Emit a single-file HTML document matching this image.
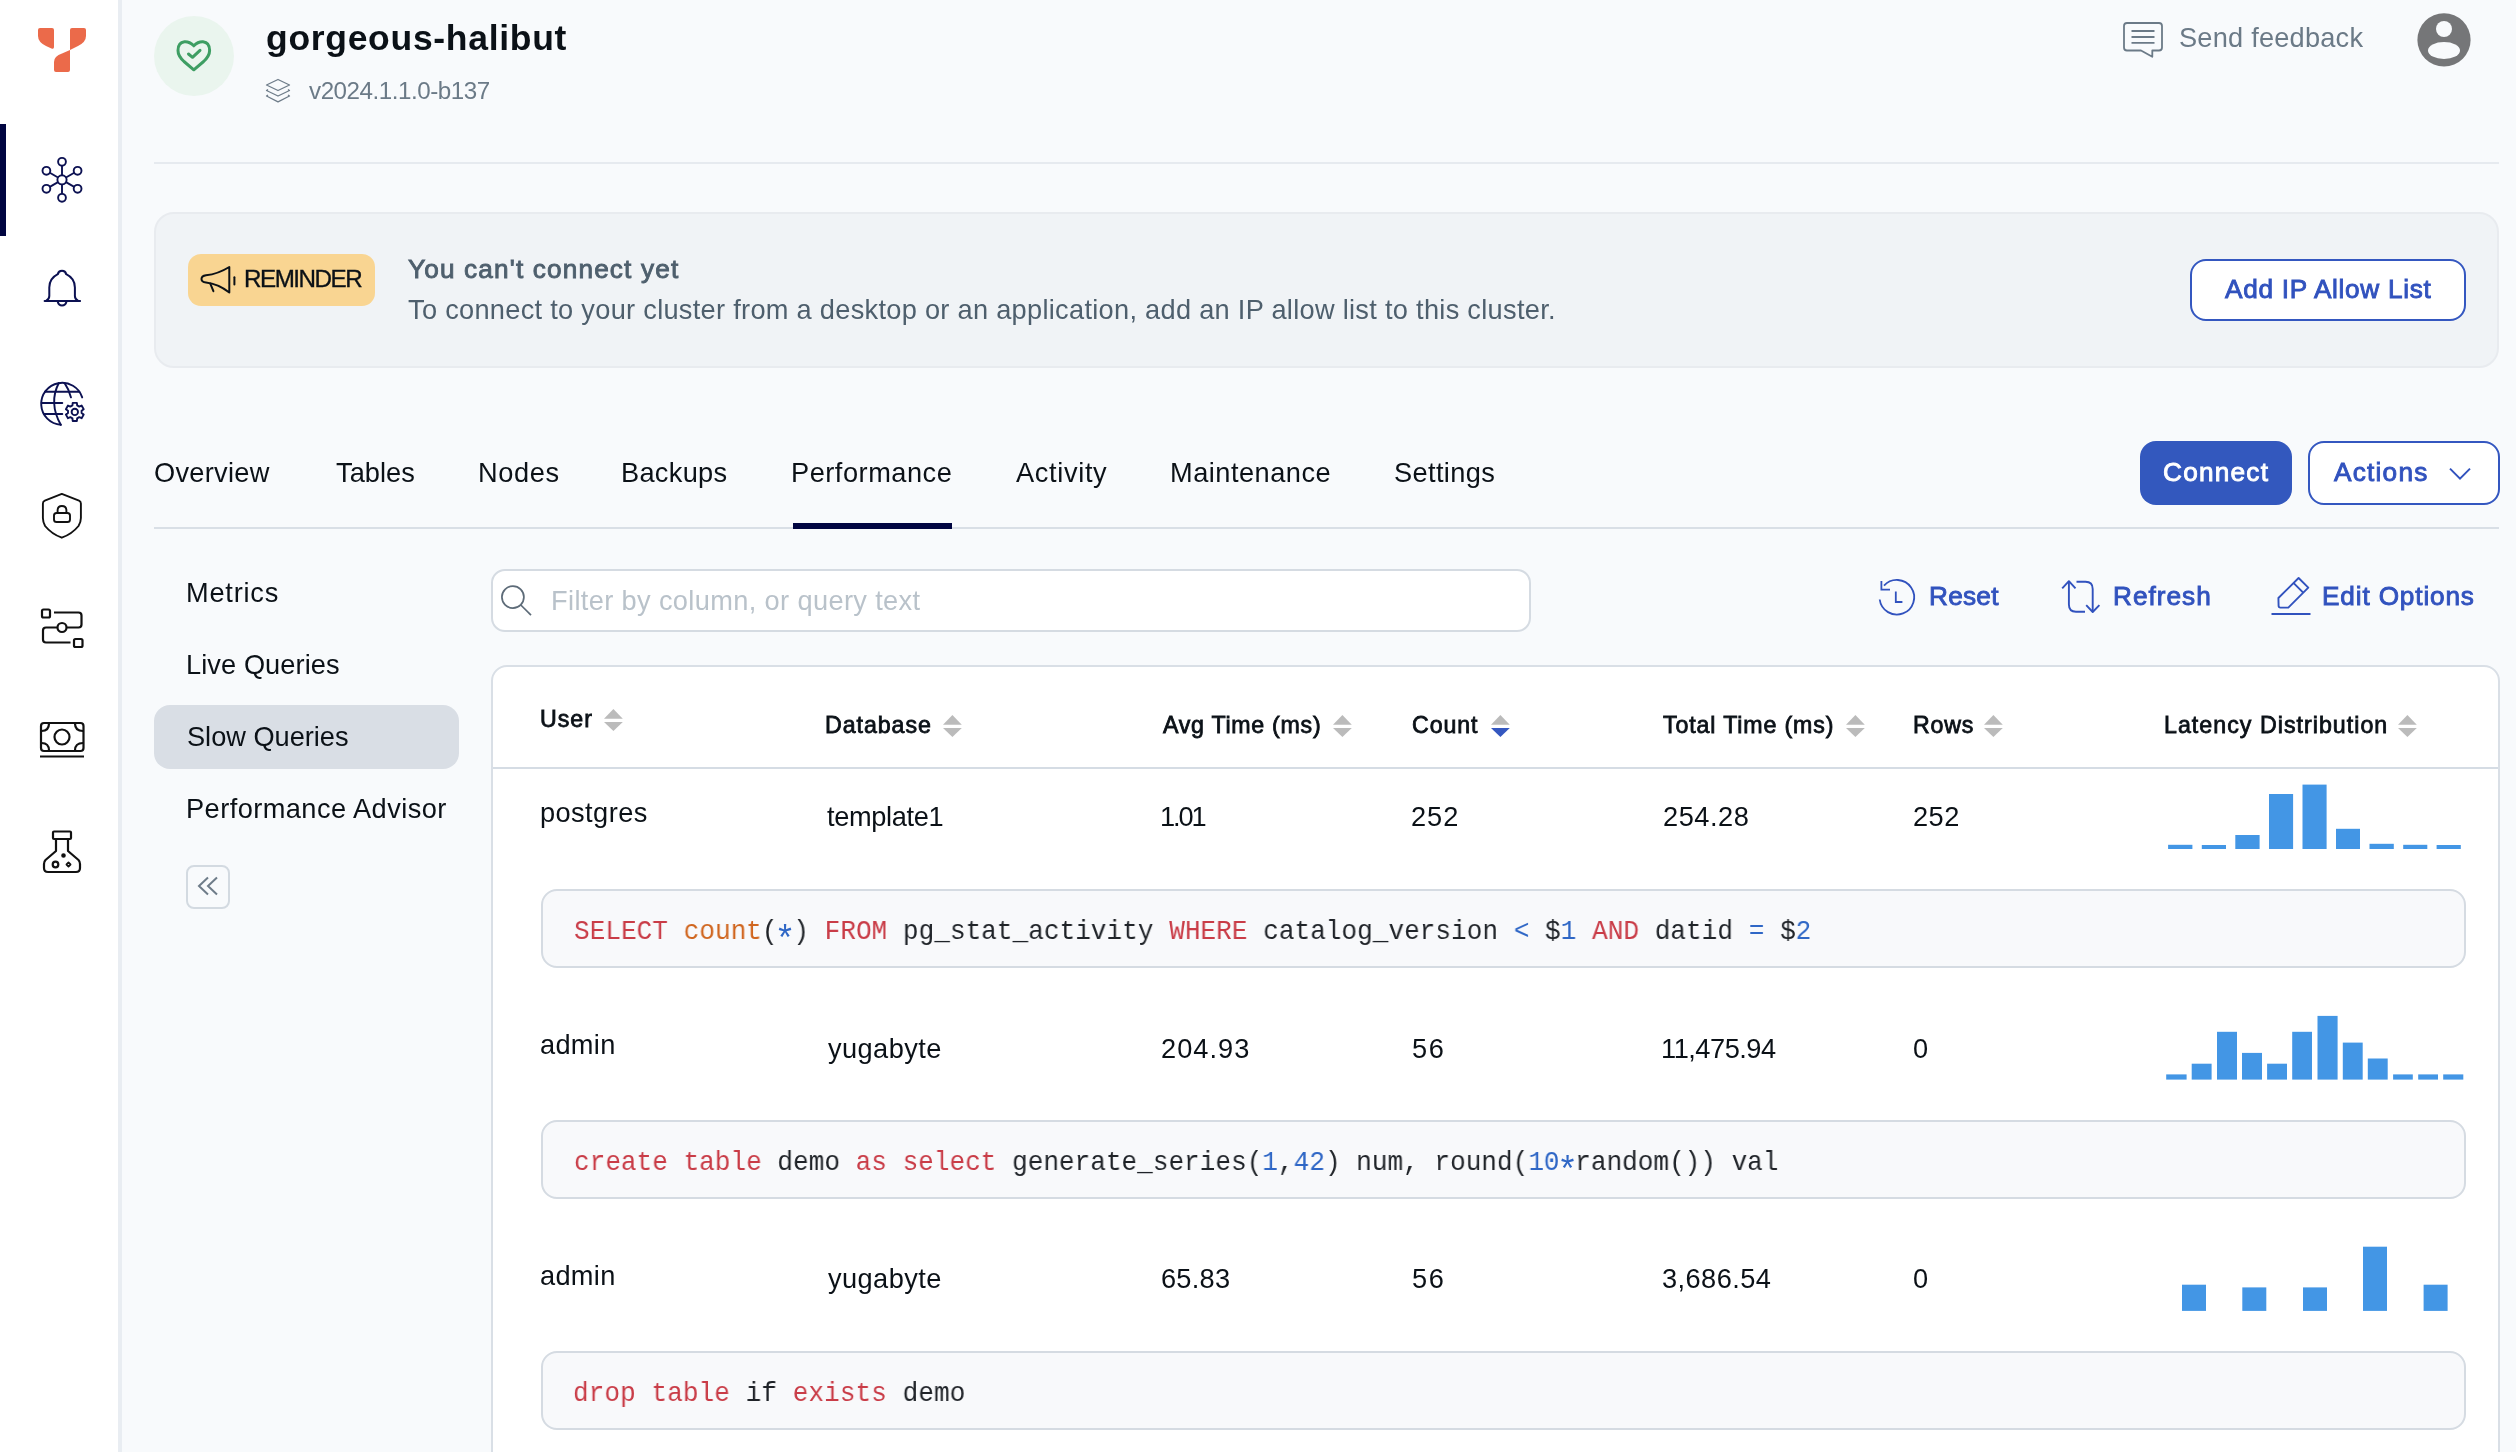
<!DOCTYPE html>
<html><head><meta charset="utf-8"><title>gorgeous-halibut</title>
<style>
html,body{margin:0;padding:0;}
body{width:2516px;height:1452px;overflow:hidden;position:relative;background:#F8FAFC;font-family:"Liberation Sans",sans-serif;}
</style></head><body>
<div style="position:absolute;left:0px;top:0px;width:118px;height:1452px;background:#FFFFFF"></div>
<div style="position:absolute;left:118px;top:0px;width:4px;height:1452px;background:#E9EDF2"></div>
<div style="position:absolute;left:0px;top:124px;width:6px;height:112px;background:#000541"></div>
<svg style="position:absolute;left:30px;top:20px;" width="64" height="60" viewBox="30 20 64 60"><g fill="#EB6A4A"><path d="M40,28 H52 Q54,28 54,30 V47 Q54,49.5 51.5,48.5 L46,46 Q38,42 38,36 V30 Q38,28 40,28 Z"/><path d="M72,28 H84 Q86,28 86,30 V36 Q86,42 78,46 L70,50 V30 Q70,28 72,28 Z"/><path d="M70,50 V70 Q70,72 68,72 H56 Q54,72 54,70 V62 Q54,56 62,53.5 Z"/></g></svg>
<svg style="position:absolute;left:36px;top:150px;" width="52" height="60" viewBox="36 150 52 60"><g fill="none" stroke="#0C1152" stroke-width="1.9"><circle cx="62" cy="179.8" r="4.6"/><circle cx="62.00" cy="161.80" r="3.9"/><line x1="62.00" y1="175.20" x2="62.00" y2="165.70"/><circle cx="77.59" cy="170.80" r="3.9"/><line x1="65.98" y1="177.50" x2="74.21" y2="172.75"/><circle cx="77.59" cy="188.80" r="3.9"/><line x1="65.98" y1="182.10" x2="74.21" y2="186.85"/><circle cx="62.00" cy="197.80" r="3.9"/><line x1="62.00" y1="184.40" x2="62.00" y2="193.90"/><circle cx="46.41" cy="188.80" r="3.9"/><line x1="58.02" y1="182.10" x2="49.79" y2="186.85"/><circle cx="46.41" cy="170.80" r="3.9"/><line x1="58.02" y1="177.50" x2="49.79" y2="172.75"/></g></svg>
<svg style="position:absolute;left:38px;top:264px;" width="48" height="48" viewBox="38 264 48 48"><g fill="none" stroke="#0C1152" stroke-width="2" stroke-linejoin="round" stroke-linecap="round"><path d="M44.6,300.9 H80.1"/><path d="M46.3,300.6 Q49.3,299 49.3,296 V287.5 Q49.3,278.5 57.8,274.2 A4.3,4.3 0 0 1 66.2,274.2 Q74.9,278.5 74.9,287.5 V296 Q74.9,299 77.9,300.6"/><path d="M57.6,301.3 Q58.6,305.6 62,305.6 Q65.6,305.6 66.6,301.3"/></g></svg>
<svg style="position:absolute;left:34px;top:376px;" width="56" height="56" viewBox="34 376 56 56"><g fill="none" stroke="#0C1152" stroke-width="1.9" stroke-linecap="round" stroke-linejoin="round"><path d="M82.2,397.4 A21,21 0 1 0 60.8,424.8"/><path d="M58.8,383 Q48.5,403 60.8,424.8"/><path d="M64.6,383.1 Q68.8,389 71,397.4"/><path d="M45,391.8 H79.4 M41.5,403 H62.3 M43.8,414 H62.3"/><circle cx="74.8" cy="411.9" r="3.2"/><path d="M72.71,402.84 L76.89,402.84 L77.16,405.42 L79.24,406.61 L81.60,405.56 L83.69,409.18 L81.60,410.70 L81.60,413.10 L83.69,414.62 L81.60,418.24 L79.24,417.19 L77.16,418.38 L76.89,420.96 L72.71,420.96 L72.44,418.38 L70.36,417.19 L68.00,418.24 L65.91,414.62 L68.00,413.10 L68.00,410.70 L65.91,409.18 L68.00,405.56 L70.36,406.61 L72.44,405.42 Z"/></g></svg>
<svg style="position:absolute;left:36px;top:488px;" width="52" height="56" viewBox="36 488 52 56"><g fill="none" stroke="#111" stroke-width="1.9" stroke-linejoin="round"><path d="M61.8,493.9 L79,500.6 Q80.9,501.4 80.9,503.5 V518 Q80.9,522 78.5,526 Q72,534 61.8,537.7 Q51.6,534 45.1,526 Q42.9,522 42.9,518 V503.5 Q42.9,501.4 44.8,500.6 Z"/><rect x="54" y="513" width="16" height="9" rx="2.6"/><path d="M57.6,512.8 V510.5 Q57.6,506 61.9,506 Q66.4,506 66.4,510.5 V512.8"/></g></svg>
<svg style="position:absolute;left:36px;top:602px;" width="52" height="52" viewBox="36 602 52 52"><g fill="none" stroke="#111" stroke-width="2.2" stroke-linejoin="round"><rect x="42" y="609.5" width="8" height="8" rx="1.5"/><rect x="74" y="639" width="8.5" height="8" rx="1.5"/><circle cx="62" cy="627.5" r="4.5"/><path d="M54,612.5 H78.5 Q81.5,612.5 81.5,615.5 V624.5 Q81.5,627.5 78.5,627.5 H66.5"/><path d="M57.5,627.5 H46 Q43,627.5 43,630.5 V639.5 Q43,642.5 46,642.5 H70.5"/></g></svg>
<svg style="position:absolute;left:36px;top:716px;" width="52" height="48" viewBox="36 716 52 48"><g fill="none" stroke="#111" stroke-width="2.2"><rect x="41" y="723" width="42.5" height="28" rx="3"/><circle cx="62" cy="737" r="7.5"/><path d="M41.5,731 Q49,731 49,723.5 M75,723.5 Q75,731 83,731 M41.5,743 Q49,743 49,750.5 M75,750.5 Q75,743 83,743"/><path d="M40,756.5 H84"/></g></svg>
<svg style="position:absolute;left:38px;top:826px;" width="48" height="52" viewBox="38 826 48 52"><g fill="none" stroke="#111" stroke-width="2.2" stroke-linejoin="round"><rect x="53" y="831.5" width="18" height="7.5" rx="1"/><path d="M56,839 V851 L45.5,860 Q44,861.5 44,864 V868 Q44,872 48,872 H76 Q80,872 80,868 V864 Q80,861.5 78.5,860 L68,851 V839"/><circle cx="55.5" cy="864.5" r="2.8"/><circle cx="63.5" cy="855.5" r="1.2" fill="#111"/><path d="M68.5,862.5 L70.5,864.5 L68.5,866.5 L66.5,864.5 Z" stroke-width="1.8"/></g></svg>
<div style="position:absolute;left:154px;top:16px;width:80px;height:80px;background:#EAF5EE;border-radius:50%"></div>
<svg style="position:absolute;left:170px;top:34px;" width="48" height="44" viewBox="170 34 48 44"><g fill="none" stroke="#3E9E63" stroke-width="3" stroke-linecap="round" stroke-linejoin="round"><path d="M193.8,45.8 Q189.5,41.5 184.5,41.8 Q178,42.5 178,50.5 Q178,56 184,61.5 L193.8,69.8 L203.6,61.5 Q209.6,56 209.6,50.5 Q209.6,42.5 203,41.8 Q198,41.5 193.8,45.8 Z"/><path d="M188.5,54 L192.5,57.3 L200,50.3"/></g></svg>
<div id="title" style="position:absolute;left:266px;top:20.85px;font-family:'Liberation Sans', sans-serif;font-size:35.5px;line-height:35.5px;font-weight:700;color:#0B1117;letter-spacing:0.7px;white-space:nowrap;will-change:transform;">gorgeous-halibut</div>
<svg style="position:absolute;left:262px;top:76px;" width="32" height="30" viewBox="262 76 32 30"><g fill="none" stroke="#6E7C89" stroke-width="1.3" stroke-linejoin="round"><path d="M278,79.5 L289.5,85 L278,90.5 L266.5,85 Z"/><path d="M268,89.5 L266.5,90.5 L278,96 L289.5,90.5 L288,89.5"/><path d="M268,95 L266.5,96 L278,101.8 L289.5,96 L288,95"/></g></svg>
<div id="ver" style="position:absolute;left:309px;top:79.21px;font-family:'Liberation Sans', sans-serif;font-size:24.2px;line-height:24.2px;font-weight:400;color:#6B7A87;letter-spacing:-0.467px;white-space:nowrap;will-change:transform;">v2024.1.1.0-b137</div>
<svg style="position:absolute;left:2118px;top:18px;" width="50" height="44" viewBox="2118 18 50 44"><g fill="none" stroke="#6B7A87" stroke-width="1.8" stroke-linejoin="round"><path d="M2127,23 H2159 Q2162,23 2162,26 V47.5 Q2162,50.5 2159,50.5 H2152.3 V56.8 L2141,50.5 H2127 Q2124,50.5 2124,47.5 V26 Q2124,23 2127,23 Z"/><path d="M2131.5,31 H2154.5 M2131.5,37 H2154.5 M2131.5,42.8 H2154.5"/></g></svg>
<div id="fb" style="position:absolute;left:2179px;top:23.98px;font-family:'Liberation Sans', sans-serif;font-size:27.2px;line-height:27.2px;font-weight:400;color:#6B7A87;letter-spacing:0.217px;white-space:nowrap;will-change:transform;">Send feedback</div>
<svg style="position:absolute;left:2414px;top:10px;" width="60" height="60" viewBox="2414 10 60 60"><circle cx="2444" cy="39.9" r="26.6" fill="#757678"/><circle cx="2444" cy="29" r="8" fill="#F8FAFC"/><ellipse cx="2444" cy="50.5" rx="16" ry="8.5" fill="#F8FAFC"/></svg>
<div style="position:absolute;left:154px;top:162px;width:2345px;height:2px;background:#E6EAEF"></div>
<div style="position:absolute;left:154px;top:212px;width:2345px;height:156px;background:#F0F3F6;border:2px solid #E8EBEF;border-radius:20px;box-sizing:border-box"></div>
<div style="position:absolute;left:188px;top:254px;width:187px;height:51.5px;background:#F9D592;border-radius:13px"></div>
<svg style="position:absolute;left:196px;top:262px;" width="44" height="36" viewBox="196 262 44 36"><g fill="none" stroke="#0B1117" stroke-width="2" stroke-linejoin="round" stroke-linecap="round"><path d="M229.3,267 V292.5 Q218,284 206,282.6 Q201.5,282 201.5,279 Q201.5,276 206,275.3 Q218,274 229.3,267 Z"/><path d="M210.3,283.6 L213.4,291.2"/><path d="M234.4,277.2 V284.4"/></g></svg>
<div id="rem" style="position:absolute;left:244.2px;top:267.01px;font-family:'Liberation Sans', sans-serif;font-size:24.2px;line-height:24.2px;font-weight:400;color:#0B1117;letter-spacing:-1.473px;white-space:nowrap;will-change:transform;-webkit-text-stroke:0.35px #0B1117;">REMINDER</div>
<div id="rt" style="position:absolute;left:408px;top:256.32px;font-family:'Liberation Sans', sans-serif;font-size:26.2px;line-height:26.2px;font-weight:400;color:#4E5F6D;letter-spacing:1.15px;white-space:nowrap;will-change:transform;-webkit-text-stroke:0.89px #4E5F6D;">You can&#39;t connect yet</div>
<div id="rb" style="position:absolute;left:408px;top:295.98px;font-family:'Liberation Sans', sans-serif;font-size:27.2px;line-height:27.2px;font-weight:400;color:#4E5F6D;letter-spacing:0.291px;white-space:nowrap;will-change:transform;">To connect to your cluster from a desktop or an application, add an IP allow list to this cluster.</div>
<div style="position:absolute;left:2189.5px;top:258.6px;width:276px;height:62.6px;background:#FFFFFF;border:2px solid #3457C0;border-radius:16px;box-sizing:border-box"></div>
<div id="addip" style="position:absolute;left:2224.6px;top:276.32px;font-family:'Liberation Sans', sans-serif;font-size:26.2px;line-height:26.2px;font-weight:400;color:#3152BE;letter-spacing:0.701px;white-space:nowrap;will-change:transform;-webkit-text-stroke:0.89px #3152BE;">Add IP Allow List</div>
<div id="tab_Overview" style="position:absolute;left:153.6px;top:458.78px;font-family:'Liberation Sans', sans-serif;font-size:27.2px;line-height:27.2px;font-weight:400;color:#0B1117;letter-spacing:0.283px;white-space:nowrap;will-change:transform;">Overview</div>
<div id="tab_Tables" style="position:absolute;left:335.5px;top:458.78px;font-family:'Liberation Sans', sans-serif;font-size:27.2px;line-height:27.2px;font-weight:400;color:#0B1117;letter-spacing:0.04px;white-space:nowrap;will-change:transform;">Tables</div>
<div id="tab_Nodes" style="position:absolute;left:477.6px;top:458.78px;font-family:'Liberation Sans', sans-serif;font-size:27.2px;line-height:27.2px;font-weight:400;color:#0B1117;letter-spacing:0.65px;white-space:nowrap;will-change:transform;">Nodes</div>
<div id="tab_Backups" style="position:absolute;left:621.3px;top:458.78px;font-family:'Liberation Sans', sans-serif;font-size:27.2px;line-height:27.2px;font-weight:400;color:#0B1117;letter-spacing:0.3px;white-space:nowrap;will-change:transform;">Backups</div>
<div id="tab_Performance" style="position:absolute;left:791.1px;top:458.78px;font-family:'Liberation Sans', sans-serif;font-size:27.2px;line-height:27.2px;font-weight:400;color:#0B1117;letter-spacing:0.52px;white-space:nowrap;will-change:transform;">Performance</div>
<div id="tab_Activity" style="position:absolute;left:1016px;top:458.78px;font-family:'Liberation Sans', sans-serif;font-size:27.2px;line-height:27.2px;font-weight:400;color:#0B1117;letter-spacing:0.657px;white-space:nowrap;will-change:transform;">Activity</div>
<div id="tab_Maintenance" style="position:absolute;left:1170px;top:458.78px;font-family:'Liberation Sans', sans-serif;font-size:27.2px;line-height:27.2px;font-weight:400;color:#0B1117;letter-spacing:0.5px;white-space:nowrap;will-change:transform;">Maintenance</div>
<div id="tab_Settings" style="position:absolute;left:1394px;top:458.78px;font-family:'Liberation Sans', sans-serif;font-size:27.2px;line-height:27.2px;font-weight:400;color:#0B1117;letter-spacing:0.371px;white-space:nowrap;will-change:transform;">Settings</div>
<div style="position:absolute;left:154px;top:527px;width:2345px;height:2px;background:#D9DFE6"></div>
<div style="position:absolute;left:793px;top:523px;width:159px;height:6px;background:#000541"></div>
<div style="position:absolute;left:2140px;top:441px;width:152px;height:64px;background:#3358BE;border-radius:16px"></div>
<div id="conn" style="position:absolute;left:2162.6px;top:459.42px;font-family:'Liberation Sans', sans-serif;font-size:26.2px;line-height:26.2px;font-weight:400;color:#FFFFFF;letter-spacing:1.233px;white-space:nowrap;will-change:transform;-webkit-text-stroke:0.89px #FFFFFF;">Connect</div>
<div style="position:absolute;left:2307.5px;top:441px;width:192px;height:64px;background:#FFFFFF;border:2px solid #3457C0;border-radius:16px;box-sizing:border-box"></div>
<div id="act" style="position:absolute;left:2334px;top:459.42px;font-family:'Liberation Sans', sans-serif;font-size:26.2px;line-height:26.2px;font-weight:400;color:#3152BE;letter-spacing:1.233px;white-space:nowrap;will-change:transform;-webkit-text-stroke:0.89px #3152BE;">Actions</div>
<svg style="position:absolute;left:2445px;top:462px;" width="30" height="24" viewBox="2445 462 30 24"><path d="M2450,468.6 L2460,478.6 L2470,468.6" fill="none" stroke="#3152BE" stroke-width="2"/></svg>
<div style="position:absolute;left:154px;top:705px;width:305px;height:64px;background:#D9DEE5;border-radius:16px"></div>
<div id="sub_Metrics" style="position:absolute;left:185.9px;top:578.88px;font-family:'Liberation Sans', sans-serif;font-size:27.2px;line-height:27.2px;font-weight:400;color:#0B1117;letter-spacing:0.785px;white-space:nowrap;will-change:transform;">Metrics</div>
<div id="sub_Live_Queries" style="position:absolute;left:185.9px;top:650.88px;font-family:'Liberation Sans', sans-serif;font-size:27.2px;line-height:27.2px;font-weight:400;color:#0B1117;letter-spacing:0.091px;white-space:nowrap;will-change:transform;">Live Queries</div>
<div id="sub_Slow_Queries" style="position:absolute;left:186.6px;top:722.88px;font-family:'Liberation Sans', sans-serif;font-size:27.2px;line-height:27.2px;font-weight:400;color:#0B1117;letter-spacing:-0.009px;white-space:nowrap;will-change:transform;">Slow Queries</div>
<div id="sub_Performance_Advisor" style="position:absolute;left:185.6px;top:794.88px;font-family:'Liberation Sans', sans-serif;font-size:27.2px;line-height:27.2px;font-weight:400;color:#0B1117;letter-spacing:0.445px;white-space:nowrap;will-change:transform;">Performance Advisor</div>
<div style="position:absolute;left:185.9px;top:865px;width:44px;height:43.5px;background:transparent;border:2px solid #D3DAE1;border-radius:8px;box-sizing:border-box"></div>
<svg style="position:absolute;left:192px;top:872px;" width="32" height="28" viewBox="192 872 32 28"><g fill="none" stroke="#6E7C89" stroke-width="2"><path d="M208,877.5 L199,886 L208,894.5"/><path d="M217,877.5 L208,886 L217,894.5"/></g></svg>
<div style="position:absolute;left:491px;top:569px;width:1039.5px;height:63px;background:#FFFFFF;border:2px solid #D5DBE2;border-radius:14px;box-sizing:border-box"></div>
<svg style="position:absolute;left:496px;top:580px;" width="42" height="42" viewBox="496 580 42 42"><g fill="none" stroke="#5D6B78" stroke-width="1.7"><circle cx="512.9" cy="597.1" r="11"/><path d="M520.8,605 L531,615.2"/></g></svg>
<div id="ph" style="position:absolute;left:551.4px;top:586.98px;font-family:'Liberation Sans', sans-serif;font-size:27.2px;line-height:27.2px;font-weight:400;color:#B9C2CA;letter-spacing:0.367px;white-space:nowrap;will-change:transform;">Filter by column, or query text</div>
<svg style="position:absolute;left:1874px;top:572px;" width="46" height="48" viewBox="1874 572 46 48"><g fill="none" stroke="#3152BE" stroke-width="1.8" transform="translate(0,1.7)"><path d="M1884,584 A17.3,17.3 0 1 1 1879.7,597.8"/><path d="M1881.4,579.3 V587.9 H1890"/><path d="M1895.8,589.8 V600.3 H1902.4"/></g></svg>
<div id="reset" style="position:absolute;left:1929px;top:583.22px;font-family:'Liberation Sans', sans-serif;font-size:26.2px;line-height:26.2px;font-weight:400;color:#3152BE;letter-spacing:0.25px;white-space:nowrap;will-change:transform;-webkit-text-stroke:0.89px #3152BE;">Reset</div>
<svg style="position:absolute;left:2058px;top:576px;" width="46" height="42" viewBox="2058 576 46 42"><g fill="none" stroke="#3152BE" stroke-width="1.9" stroke-linejoin="round"><path d="M2062.2,588.4 L2068.9,581.2 L2075.5,588.4"/><path d="M2068.9,581.5 V604.5 Q2068.9,611.7 2076,611.7 H2085"/><path d="M2076.5,581.8 H2085.5 Q2092.7,581.8 2092.7,589 V611.8"/><path d="M2086.2,605.2 L2092.7,612 L2099.4,605.2"/></g></svg>
<div id="refr" style="position:absolute;left:2113.2px;top:583.22px;font-family:'Liberation Sans', sans-serif;font-size:26.2px;line-height:26.2px;font-weight:400;color:#3152BE;letter-spacing:1.0px;white-space:nowrap;will-change:transform;-webkit-text-stroke:0.89px #3152BE;">Refresh</div>
<svg style="position:absolute;left:2266px;top:572px;" width="50" height="48" viewBox="2266 572 50 48"><g fill="none" stroke="#3152BE" stroke-width="1.9" stroke-linejoin="round"><path d="M2278.4,598 L2298.6,578 L2308.3,587.6 L2288.3,607.6 H2280.4 Q2278.6,607.6 2278.6,605.8 Z"/><path d="M2293.7,583.1 L2303.2,592.7"/><path d="M2271.5,614 H2310.5"/></g></svg>
<div id="edit" style="position:absolute;left:2322.3px;top:583.22px;font-family:'Liberation Sans', sans-serif;font-size:26.2px;line-height:26.2px;font-weight:400;color:#3152BE;letter-spacing:0.846px;white-space:nowrap;will-change:transform;-webkit-text-stroke:0.89px #3152BE;">Edit Options</div>
<div style="position:absolute;left:491px;top:665px;width:2009px;height:900px;background:#FFFFFF;border:2px solid #D9DFE6;border-radius:16px;box-sizing:border-box"></div>
<div style="position:absolute;left:493px;top:767px;width:2005px;height:2px;background:#D5DCE4"></div>
<div id="h_User" style="position:absolute;left:540.2px;top:707.66px;font-family:'Liberation Sans', sans-serif;font-size:23.2px;line-height:23.2px;font-weight:400;color:#0B1117;letter-spacing:0.999px;white-space:nowrap;will-change:transform;-webkit-text-stroke:0.79px #0B1117;">User</div>
<svg style="position:absolute;left:602.1px;top:707.2px;" width="24" height="26" viewBox="602.1 707.2 24 26"><path d="M604.1,719.0 L613.5,709.2 L622.9,719.0 Z" fill="#BBBBBB"/><path d="M604.1,722.1 L613.5,731.2 L622.9,722.1 Z" fill="#BBBBBB"/></svg>
<div id="h_Database" style="position:absolute;left:825.4px;top:713.56px;font-family:'Liberation Sans', sans-serif;font-size:23.2px;line-height:23.2px;font-weight:400;color:#0B1117;letter-spacing:0.942px;white-space:nowrap;will-change:transform;-webkit-text-stroke:0.79px #0B1117;">Database</div>
<svg style="position:absolute;left:940.7px;top:713.4px;" width="24" height="26" viewBox="940.7 713.4 24 26"><path d="M942.7,725.1999999999999 L952.1,715.4 L961.5,725.1999999999999 Z" fill="#BBBBBB"/><path d="M942.7,728.3 L952.1,737.4 L961.5,728.3 Z" fill="#BBBBBB"/></svg>
<div id="h_Avg" style="position:absolute;left:1162.6px;top:713.56px;font-family:'Liberation Sans', sans-serif;font-size:23.2px;line-height:23.2px;font-weight:400;color:#0B1117;letter-spacing:0.717px;white-space:nowrap;will-change:transform;-webkit-text-stroke:0.79px #0B1117;">Avg Time (ms)</div>
<svg style="position:absolute;left:1331.4px;top:713.4px;" width="24" height="26" viewBox="1331.4 713.4 24 26"><path d="M1333.4,725.1999999999999 L1342.8000000000002,715.4 L1352.2,725.1999999999999 Z" fill="#BBBBBB"/><path d="M1333.4,728.3 L1342.8000000000002,737.4 L1352.2,728.3 Z" fill="#BBBBBB"/></svg>
<div id="h_Count" style="position:absolute;left:1411.9px;top:713.56px;font-family:'Liberation Sans', sans-serif;font-size:23.2px;line-height:23.2px;font-weight:400;color:#0B1117;letter-spacing:0.9px;white-space:nowrap;will-change:transform;-webkit-text-stroke:0.79px #0B1117;">Count</div>
<svg style="position:absolute;left:1488.9px;top:713.4px;" width="24" height="26" viewBox="1488.9 713.4 24 26"><path d="M1490.9,725.1999999999999 L1500.3000000000002,715.4 L1509.7,725.1999999999999 Z" fill="#BBBBBB"/><path d="M1490.9,728.3 L1500.3000000000002,737.4 L1509.7,728.3 Z" fill="#3457C0"/></svg>
<div id="h_Total" style="position:absolute;left:1663.4px;top:713.56px;font-family:'Liberation Sans', sans-serif;font-size:23.2px;line-height:23.2px;font-weight:400;color:#0B1117;letter-spacing:0.856px;white-space:nowrap;will-change:transform;-webkit-text-stroke:0.79px #0B1117;">Total Time (ms)</div>
<svg style="position:absolute;left:1843.8px;top:713.4px;" width="24" height="26" viewBox="1843.8 713.4 24 26"><path d="M1845.8,725.1999999999999 L1855.2,715.4 L1864.6,725.1999999999999 Z" fill="#BBBBBB"/><path d="M1845.8,728.3 L1855.2,737.4 L1864.6,728.3 Z" fill="#BBBBBB"/></svg>
<div id="h_Rows" style="position:absolute;left:1912.7px;top:713.56px;font-family:'Liberation Sans', sans-serif;font-size:23.2px;line-height:23.2px;font-weight:400;color:#0B1117;letter-spacing:0.8px;white-space:nowrap;will-change:transform;-webkit-text-stroke:0.79px #0B1117;">Rows</div>
<svg style="position:absolute;left:1982.4px;top:713.4px;" width="24" height="26" viewBox="1982.4 713.4 24 26"><path d="M1984.4,725.1999999999999 L1993.8000000000002,715.4 L2003.2,725.1999999999999 Z" fill="#BBBBBB"/><path d="M1984.4,728.3 L1993.8000000000002,737.4 L2003.2,728.3 Z" fill="#BBBBBB"/></svg>
<div id="h_Latency" style="position:absolute;left:2163.5px;top:713.56px;font-family:'Liberation Sans', sans-serif;font-size:23.2px;line-height:23.2px;font-weight:400;color:#0B1117;letter-spacing:1.033px;white-space:nowrap;will-change:transform;-webkit-text-stroke:0.79px #0B1117;">Latency Distribution</div>
<svg style="position:absolute;left:2396px;top:713.4px;" width="24" height="26" viewBox="2396 713.4 24 26"><path d="M2398,725.1999999999999 L2407.4,715.4 L2416.8,725.1999999999999 Z" fill="#BBBBBB"/><path d="M2398,728.3 L2407.4,737.4 L2416.8,728.3 Z" fill="#BBBBBB"/></svg>
<div id="r0c0" style="position:absolute;left:540.2px;top:798.68px;font-family:'Liberation Sans', sans-serif;font-size:27.2px;line-height:27.2px;font-weight:400;color:#0B1117;letter-spacing:0.429px;white-space:nowrap;will-change:transform;">postgres</div>
<div id="r0c1" style="position:absolute;left:826.9px;top:802.98px;font-family:'Liberation Sans', sans-serif;font-size:27.2px;line-height:27.2px;font-weight:400;color:#0B1117;letter-spacing:-0.346px;white-space:nowrap;will-change:transform;">template1</div>
<div id="r0c2" style="position:absolute;left:1159.6px;top:802.98px;font-family:'Liberation Sans', sans-serif;font-size:27.2px;line-height:27.2px;font-weight:400;color:#0B1117;letter-spacing:-2.134px;white-space:nowrap;will-change:transform;">1.01</div>
<div id="r0c3" style="position:absolute;left:1410.9px;top:802.98px;font-family:'Liberation Sans', sans-serif;font-size:27.2px;line-height:27.2px;font-weight:400;color:#0B1117;letter-spacing:1.0px;white-space:nowrap;will-change:transform;">252</div>
<div id="r0c4" style="position:absolute;left:1663.1px;top:802.98px;font-family:'Liberation Sans', sans-serif;font-size:27.2px;line-height:27.2px;font-weight:400;color:#0B1117;letter-spacing:0.52px;white-space:nowrap;will-change:transform;">254.28</div>
<div id="r0c5" style="position:absolute;left:1913.4px;top:802.98px;font-family:'Liberation Sans', sans-serif;font-size:27.2px;line-height:27.2px;font-weight:400;color:#0B1117;letter-spacing:0.5px;white-space:nowrap;will-change:transform;">252</div>
<div id="r1c0" style="position:absolute;left:540.2px;top:1030.98px;font-family:'Liberation Sans', sans-serif;font-size:27.2px;line-height:27.2px;font-weight:400;color:#0B1117;letter-spacing:0.3px;white-space:nowrap;will-change:transform;">admin</div>
<div id="r1c1" style="position:absolute;left:827.9px;top:1034.78px;font-family:'Liberation Sans', sans-serif;font-size:27.2px;line-height:27.2px;font-weight:400;color:#0B1117;letter-spacing:0.428px;white-space:nowrap;will-change:transform;">yugabyte</div>
<div id="r1c2" style="position:absolute;left:1161.2px;top:1034.78px;font-family:'Liberation Sans', sans-serif;font-size:27.2px;line-height:27.2px;font-weight:400;color:#0B1117;letter-spacing:1.04px;white-space:nowrap;will-change:transform;">204.93</div>
<div id="r1c3" style="position:absolute;left:1412.1px;top:1034.78px;font-family:'Liberation Sans', sans-serif;font-size:27.2px;line-height:27.2px;font-weight:400;color:#0B1117;letter-spacing:1.6px;white-space:nowrap;will-change:transform;">56</div>
<div id="r1c4" style="position:absolute;left:1660.5px;top:1034.78px;font-family:'Liberation Sans', sans-serif;font-size:27.2px;line-height:27.2px;font-weight:400;color:#0B1117;letter-spacing:-0.475px;white-space:nowrap;will-change:transform;">11,475.94</div>
<div id="r1c5" style="position:absolute;left:1912.8px;top:1034.78px;font-family:'Liberation Sans', sans-serif;font-size:27.2px;line-height:27.2px;font-weight:400;color:#0B1117;letter-spacing:6.4px;white-space:nowrap;will-change:transform;">0</div>
<div id="r2c0" style="position:absolute;left:540.2px;top:1261.88px;font-family:'Liberation Sans', sans-serif;font-size:27.2px;line-height:27.2px;font-weight:400;color:#0B1117;letter-spacing:0.3px;white-space:nowrap;will-change:transform;">admin</div>
<div id="r2c1" style="position:absolute;left:827.9px;top:1264.98px;font-family:'Liberation Sans', sans-serif;font-size:27.2px;line-height:27.2px;font-weight:400;color:#0B1117;letter-spacing:0.428px;white-space:nowrap;will-change:transform;">yugabyte</div>
<div id="r2c2" style="position:absolute;left:1161px;top:1264.98px;font-family:'Liberation Sans', sans-serif;font-size:27.2px;line-height:27.2px;font-weight:400;color:#0B1117;letter-spacing:0.25px;white-space:nowrap;will-change:transform;">65.83</div>
<div id="r2c3" style="position:absolute;left:1412.1px;top:1264.98px;font-family:'Liberation Sans', sans-serif;font-size:27.2px;line-height:27.2px;font-weight:400;color:#0B1117;letter-spacing:1.6px;white-space:nowrap;will-change:transform;">56</div>
<div id="r2c4" style="position:absolute;left:1661.5px;top:1264.98px;font-family:'Liberation Sans', sans-serif;font-size:27.2px;line-height:27.2px;font-weight:400;color:#0B1117;letter-spacing:0.429px;white-space:nowrap;will-change:transform;">3,686.54</div>
<div id="r2c5" style="position:absolute;left:1912.8px;top:1264.98px;font-family:'Liberation Sans', sans-serif;font-size:27.2px;line-height:27.2px;font-weight:400;color:#0B1117;letter-spacing:6.4px;white-space:nowrap;will-change:transform;">0</div>
<div style="position:absolute;left:541.4px;top:889px;width:1925px;height:79px;background:#F8F9FB;border:2px solid #D5DBE2;border-radius:16px;box-sizing:border-box"></div>
<div id="q0" style="position:absolute;left:574.4px;top:917.69px;font-family:'Liberation Mono', monospace;font-size:27.8px;line-height:27.8px;font-weight:400;color:#1F2328;letter-spacing:0.033px;white-space:nowrap;will-change:transform;white-space:pre;transform:scaleX(0.937);transform-origin:0 0"><span style="color:#C93C47">SELECT</span> <span style="color:#D0661F">count</span><span style="color:#1F2328">(</span><span style="color:#2F67C6;display:inline-block;transform:translateY(10px) scale(1.35)">*</span><span style="color:#1F2328">)</span> <span style="color:#C93C47">FROM</span> <span style="color:#1F2328">pg_stat_activity</span> <span style="color:#C93C47">WHERE</span> <span style="color:#1F2328">catalog_version</span> <span style="color:#2F67C6">&lt;</span> <span style="color:#1F2328">$</span><span style="color:#2F67C6">1</span> <span style="color:#C93C47">AND</span> <span style="color:#1F2328">datid</span> <span style="color:#2F67C6">=</span> <span style="color:#1F2328">$</span><span style="color:#2F67C6">2</span></div>
<div style="position:absolute;left:541.4px;top:1120px;width:1925px;height:79px;background:#F8F9FB;border:2px solid #D5DBE2;border-radius:16px;box-sizing:border-box"></div>
<div id="q1" style="position:absolute;left:574.2px;top:1148.69px;font-family:'Liberation Mono', monospace;font-size:27.8px;line-height:27.8px;font-weight:400;color:#1F2328;letter-spacing:0.012px;white-space:nowrap;will-change:transform;white-space:pre;transform:scaleX(0.937);transform-origin:0 0"><span style="color:#C93C47">create</span> <span style="color:#C93C47">table</span> <span style="color:#1F2328">demo</span> <span style="color:#C93C47">as</span> <span style="color:#C93C47">select</span> <span style="color:#1F2328">generate_series(</span><span style="color:#2F67C6">1</span><span style="color:#1F2328">,</span><span style="color:#2F67C6">42</span><span style="color:#1F2328">) num, round(</span><span style="color:#2F67C6">10</span><span style="color:#2F67C6;display:inline-block;transform:translateY(10px) scale(1.35)">*</span><span style="color:#1F2328">random()) val</span></div>
<div style="position:absolute;left:541.4px;top:1351px;width:1925px;height:79px;background:#F8F9FB;border:2px solid #D5DBE2;border-radius:16px;box-sizing:border-box"></div>
<div id="q2" style="position:absolute;left:573.2px;top:1379.69px;font-family:'Liberation Mono', monospace;font-size:27.8px;line-height:27.8px;font-weight:400;color:#1F2328;letter-spacing:0.065px;white-space:nowrap;will-change:transform;white-space:pre;transform:scaleX(0.937);transform-origin:0 0"><span style="color:#C93C47">drop</span> <span style="color:#C93C47">table</span> <span style="color:#1F2328">if</span> <span style="color:#C93C47">exists</span> <span style="color:#1F2328">demo</span></div>
<svg style="position:absolute;left:2150px;top:770px;" width="330" height="560" viewBox="2150 770 330 560"><g fill="#4396E5"><rect x="2168.1" y="844.8" width="24.30" height="4.20"/><rect x="2201.8" y="845" width="24.20" height="4.00"/><rect x="2235.3" y="835" width="24.30" height="14.00"/><rect x="2269" y="794" width="24.10" height="55.00"/><rect x="2302.5" y="784.6" width="24.10" height="64.40"/><rect x="2336" y="828.8" width="24.00" height="20.20"/><rect x="2369.5" y="843.8" width="24.30" height="5.20"/><rect x="2403.2" y="844.8" width="24.10" height="4.20"/><rect x="2436.6" y="845" width="24.20" height="4.00"/><rect x="2166.2" y="1074.4" width="20.40" height="5.20"/><rect x="2191.7" y="1063.7" width="19.90" height="15.90"/><rect x="2217" y="1031.8" width="20.00" height="47.80"/><rect x="2242" y="1052.9" width="20.00" height="26.70"/><rect x="2267.1" y="1063.7" width="19.90" height="15.90"/><rect x="2292.2" y="1031.8" width="19.80" height="47.80"/><rect x="2317.5" y="1015.9" width="20.10" height="63.70"/><rect x="2342.8" y="1042.6" width="19.90" height="37.00"/><rect x="2367.8" y="1058.5" width="19.90" height="21.10"/><rect x="2393.1" y="1074.4" width="19.70" height="5.20"/><rect x="2418.2" y="1074.4" width="19.80" height="5.20"/><rect x="2443.2" y="1074.4" width="20.10" height="5.20"/><rect x="2182" y="1284.7" width="24.00" height="26.20"/><rect x="2242.3" y="1287.4" width="24.00" height="23.50"/><rect x="2303" y="1287.4" width="24.00" height="23.50"/><rect x="2363" y="1246.7" width="24.00" height="64.20"/><rect x="2423.6" y="1284.7" width="24.00" height="26.20"/></g></svg>
</body></html>
